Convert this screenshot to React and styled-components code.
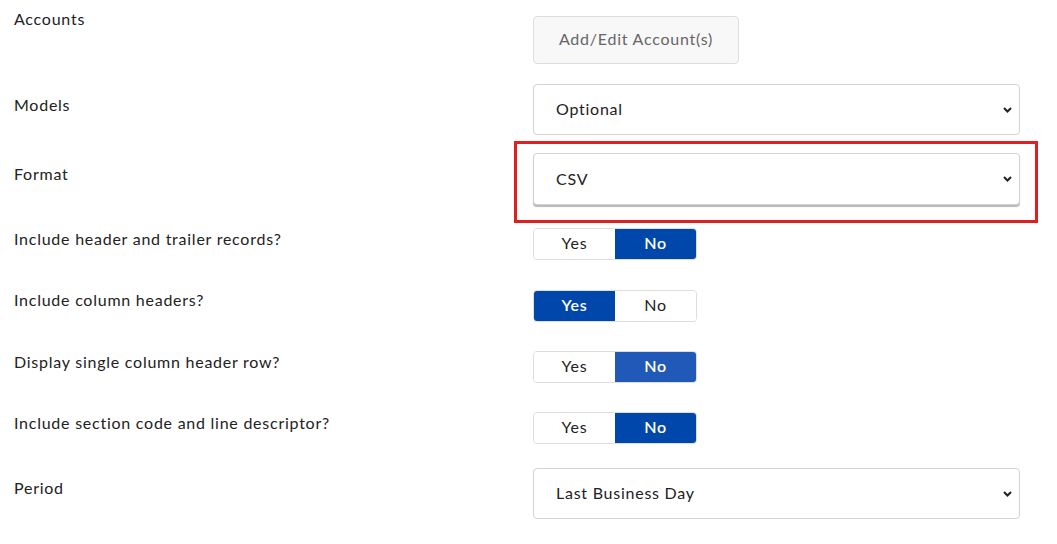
import React from 'react'
import styled, { createGlobalStyle } from 'styled-components'

const GlobalStyle = createGlobalStyle`
	html, body {
		margin: 0;
		padding: 0;
		background: #fff;
	}
	body {
		font-family: Lato, 'Open Sans', sans-serif;
		letter-spacing: 0.75px;
		color: #222;
	}
`

const Form = styled.div`
	padding: 16px 37px 0 14px;
	width: 1057px;
	box-sizing: border-box;
`

const Row = styled.div`
	display: flex;
	align-items: flex-start;
	margin-bottom: ${(p) => p.gap || 0}px;
`

const Label = styled.div`
	width: 519px;
	flex: none;
	font-size: 16px;
	line-height: 20px;
	color: #222;
	margin-top: ${(p) => p.offset || 0}px;
`

const Control = styled.div`
	flex: 1;
	min-width: 0;
`

const GhostButton = styled.button`
	height: 48px;
	width: 206px;
	padding: 0 0 4px;
	border: 1px solid #ddd;
	border-radius: 4px;
	background: #f8f8f8;
	color: #666;
	font-family: inherit;
	letter-spacing: inherit;
	font-size: 16px;
	cursor: pointer;
`

const SelectWrap = styled.div`
	position: relative;
	${(p) =>
		p.highlight &&
		`
		&::after {
			content: '';
			position: absolute;
			left: -19px;
			right: -18px;
			top: -12px;
			bottom: -18px;
			border: 3px solid #e02020;
			pointer-events: none;
		}
	`}
`

const Select = styled.select`
	appearance: none;
	width: 100%;
	height: ${(p) => p.h || 51}px;
	border: 1px solid #d3d3d3;
	border-radius: 4px;
	background: #fff;
	padding: 0 40px 2px 22px;
	font-family: inherit;
	letter-spacing: inherit;
	font-size: 16px;
	color: #222;
	box-shadow: ${(p) => (p.raised ? '0 2px 1px rgba(0,0,0,0.28)' : 'none')};
	outline: none;
`

const Chevron = styled.svg`
	position: absolute;
	right: 8px;
	top: 50%;
	margin-top: -3px;
	width: 9px;
	height: 6px;
	pointer-events: none;
`

const Toggle = styled.div`
	display: inline-flex;
	width: 164px;
	height: 32px;
	border: 1px solid #ddd;
	border-radius: 4px;
	overflow: hidden;
	box-sizing: border-box;
`

const ToggleOption = styled.button`
	flex: 1;
	border: none;
	margin: 0;
	padding: 0 0 3px;
	font-family: inherit;
	letter-spacing: inherit;
	font-size: 16px;
	font-weight: ${(p) => (p.active ? 600 : 400)};
	color: ${(p) => (p.active ? '#fff' : '#222')};
	background: ${(p) => (p.active ? (p.hover ? '#2059b8' : '#0047ab') : '#fff')};
	cursor: pointer;
`

const Dropdown = ({ value, highlight, raised, h }) => (
	<SelectWrap highlight={highlight}>
		<Select defaultValue={value} raised={raised} h={h}>
			<option>{value}</option>
		</Select>
		<Chevron viewBox="0 0 9 6">
			<path d="M1 1 L4.5 4.5 L8 1" fill="none" stroke="#222" strokeWidth="2" />
		</Chevron>
	</SelectWrap>
)

const YesNo = ({ value, hover }) => (
	<Toggle>
		<ToggleOption active={value === 'yes'} hover={hover}>Yes</ToggleOption>
		<ToggleOption active={value === 'no'} hover={hover}>No</ToggleOption>
	</Toggle>
)

const App = () => (
	<React.Fragment>
		<GlobalStyle />
		<Form>
			<Row gap={20}>
				<Label offset={-7}>Accounts</Label>
				<Control>
					<GhostButton>Add/Edit Account(s)</GhostButton>
				</Control>
			</Row>
			<Row gap={18}>
				<Label offset={11}>Models</Label>
				<Control>
					<Dropdown value="Optional" />
				</Control>
			</Row>
			<Row gap={23}>
				<Label offset={11}>Format</Label>
				<Control>
					<Dropdown value="CSV" highlight raised h={52} />
				</Control>
			</Row>
			<Row gap={30}>
				<Label offset={1}>Include header and trailer records?</Label>
				<Control>
					<YesNo value="no" />
				</Control>
			</Row>
			<Row gap={29}>
				<Label>Include column headers?</Label>
				<Control>
					<YesNo value="yes" />
				</Control>
			</Row>
			<Row gap={29}>
				<Label offset={1}>Display single column header row?</Label>
				<Control>
					<YesNo value="no" hover />
				</Control>
			</Row>
			<Row gap={24}>
				<Label offset={1}>Include section code and line descriptor?</Label>
				<Control>
					<YesNo value="no" />
				</Control>
			</Row>
			<Row>
				<Label offset={10}>Period</Label>
				<Control>
					<Dropdown value="Last Business Day" h={51} />
				</Control>
			</Row>
		</Form>
	</React.Fragment>
)

export default App
